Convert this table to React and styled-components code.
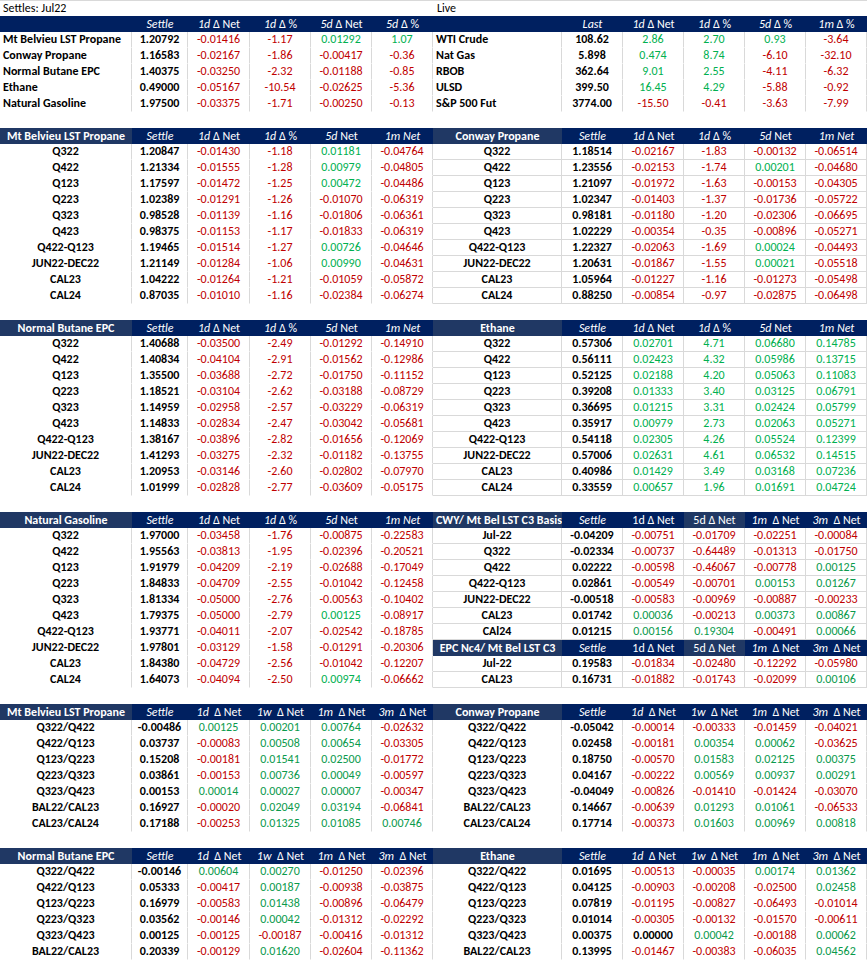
import React from "react";
import styled, { createGlobalStyle } from "styled-components";

const NAVY = "#002060";
const LIGHT = "#203864";
const RED = "#c00000";
const GREEN = "#00b050";
const DEEP_GREEN = "#0a9a4c";
const GRID = "#d9d9d9";

const GlobalStyle = createGlobalStyle`
  html, body { margin: 0; padding: 0; background: #fff; }
  body {
    font-family: Calibri, Carlito, Lato, "Liberation Sans", sans-serif;
    font-size: 12px;
    color: #000;
  }
`;

const LEFT_COLS = "132px 56px 62px 61px 61px 61px";
const RIGHT_COLS = "129px 61px 61px 61px 61px 61px";

const Sheet = styled.div`
  width: 867px;
  display: flex;
  flex-direction: column;
`;

const TitleRow = styled.div`
  display: grid;
  grid-template-columns: 433px 434px;
  height: 16px;
  box-sizing: border-box;
  border-top: 1px solid ${GRID};
`;

const TitleText = styled.div`
  padding-left: ${(p) => p.$pad || 3}px;
  line-height: 15px;
  white-space: nowrap;
`;

const Band = styled.div`
  display: grid;
  grid-template-columns: 433px 434px;
  align-items: start;
`;

const Gap = styled.div`
  height: 16px;
`;

const Stack = styled.div`
  display: flex;
  flex-direction: column;
`;

const Grid = styled.div`
  display: grid;
  grid-template-columns: ${(p) => p.$cols};
  grid-auto-rows: 16px;
`;

const Head = styled.div`
  background: ${(p) => (p.$light ? LIGHT : NAVY)};
  color: #fff;
  font-weight: ${(p) => (p.$bold ? 700 : 400)};
  text-align: center;
  line-height: 16px;
  white-space: ${(p) => (p.$clip ? "nowrap" : "pre")};
  overflow: hidden;
  padding: ${(p) => (p.$clip ? "0 0 0 3px" : "0")};
  text-align: ${(p) => (p.$clip ? "left" : "center")};
`;

const Em = styled.i`
  font-style: italic;
`;

const Cell = styled.div`
  box-sizing: border-box;
  line-height: 15px;
  height: 16px;
  white-space: nowrap;
  overflow: hidden;
  text-align: ${(p) => (p.$left ? "left" : "center")};
  padding-left: ${(p) => (p.$left ? "3px" : "0")};
  color: ${(p) => p.$color};
  font-weight: ${(p) => (p.$bold ? 700 : 400)};
  border-right: 1px solid ${GRID};
  border-bottom: 1px solid ${(p) => (p.$lines ? GRID : "transparent")};
`;

function HeadText({ text }) {
  const parts = text.split("*");
  return parts.map((s, i) => (i % 2 ? <Em key={i}>{s}</Em> : <React.Fragment key={i}>{s}</React.Fragment>));
}

function toneOf(v, deep) {
  if (/^-/.test(v)) return RED;
  if (/^0\.0+$/.test(v)) return "#000";
  return deep ? DEEP_GREEN : GREEN;
}

function Table({ cols, title, titleLight = true, heads, rows, leftLabels, lines, deep, clipTitle, lightHeads = [] }) {
  return (
    <Grid $cols={cols}>
      <Head $bold $light={titleLight} $clip={clipTitle}>{title}</Head>
      {heads.map((h, i) => (
        <Head key={i} $light={lightHeads.includes(i)}>
          <HeadText text={h} />
        </Head>
      ))}
      {rows.map((r, ri) =>
        r.map((v, ci) => {
          if (ci === 0)
            return (
              <Cell key={ri + "-" + ci} $left={leftLabels} $bold $color="#000" $lines={lines}>
                {v}
              </Cell>
            );
          if (ci === 1)
            return (
              <Cell key={ri + "-" + ci} $bold $color="#000" $lines={lines}>
                {v}
              </Cell>
            );
          const c = toneOf(v, deep);
          return (
            <Cell key={ri + "-" + ci} $bold={c === "#000"} $color={c} $lines={lines}>
              {v}
            </Cell>
          );
        })
      )}
    </Grid>
  );
}

const split = (s) => s.trim().split("\n").map((l) => l.trim().split(/\s+/));
const splitNamed = (s) =>
  s
    .trim()
    .split("\n")
    .map((l) => l.split("|").map((x) => x.trim()));

const overviewLeft = splitNamed(`
Mt Belvieu LST Propane|1.20792|-0.01416|-1.17|0.01292|1.07
Conway Propane|1.16583|-0.02167|-1.86|-0.00417|-0.36
Normal Butane EPC|1.40375|-0.03250|-2.32|-0.01188|-0.85
Ethane|0.49000|-0.05167|-10.54|-0.02625|-5.36
Natural Gasoline|1.97500|-0.03375|-1.71|-0.00250|-0.13
`);

const overviewRight = splitNamed(`
WTI Crude|108.62|2.86|2.70|0.93|-3.64
Nat Gas|5.898|0.474|8.74|-6.10|-32.10
RBOB|362.64|9.01|2.55|-4.11|-6.32
ULSD|399.50|16.45|4.29|-5.88|-0.92
S&P 500 Fut|3774.00|-15.50|-0.41|-3.63|-7.99
`);

const mbProp = split(`
Q322 1.20847 -0.01430 -1.18 0.01181 -0.04764
Q422 1.21334 -0.01555 -1.28 0.00979 -0.04805
Q123 1.17597 -0.01472 -1.25 0.00472 -0.04486
Q223 1.02389 -0.01291 -1.26 -0.01070 -0.06319
Q323 0.98528 -0.01139 -1.16 -0.01806 -0.06361
Q423 0.98375 -0.01153 -1.17 -0.01833 -0.06319
Q422-Q123 1.19465 -0.01514 -1.27 0.00726 -0.04646
JUN22-DEC22 1.21149 -0.01284 -1.06 0.00990 -0.04631
CAL23 1.04222 -0.01264 -1.21 -0.01059 -0.05872
CAL24 0.87035 -0.01010 -1.16 -0.02384 -0.06274
`);

const conway = split(`
Q322 1.18514 -0.02167 -1.83 -0.00132 -0.06514
Q422 1.23556 -0.02153 -1.74 0.00201 -0.04680
Q123 1.21097 -0.01972 -1.63 -0.00153 -0.04305
Q223 1.02347 -0.01403 -1.37 -0.01736 -0.05722
Q323 0.98181 -0.01180 -1.20 -0.02306 -0.06695
Q423 1.02229 -0.00354 -0.35 -0.00896 -0.05271
Q422-Q123 1.22327 -0.02063 -1.69 0.00024 -0.04493
JUN22-DEC22 1.20631 -0.01867 -1.55 0.00021 -0.05518
CAL23 1.05964 -0.01227 -1.16 -0.01273 -0.05498
CAL24 0.88250 -0.00854 -0.97 -0.02875 -0.06498
`);

const butane = split(`
Q322 1.40688 -0.03500 -2.49 -0.01292 -0.14910
Q422 1.40834 -0.04104 -2.91 -0.01562 -0.12986
Q123 1.35500 -0.03688 -2.72 -0.01750 -0.11152
Q223 1.18521 -0.03104 -2.62 -0.03188 -0.08729
Q323 1.14959 -0.02958 -2.57 -0.03229 -0.06319
Q423 1.14833 -0.02834 -2.47 -0.03042 -0.05681
Q422-Q123 1.38167 -0.03896 -2.82 -0.01656 -0.12069
JUN22-DEC22 1.41293 -0.03275 -2.32 -0.01182 -0.13755
CAL23 1.20953 -0.03146 -2.60 -0.02802 -0.07970
CAL24 1.01999 -0.02828 -2.77 -0.03609 -0.05175
`);

const ethane = split(`
Q322 0.57306 0.02701 4.71 0.06680 0.14785
Q422 0.56111 0.02423 4.32 0.05986 0.13715
Q123 0.52125 0.02188 4.20 0.05063 0.11083
Q223 0.39208 0.01333 3.40 0.03125 0.06791
Q323 0.36695 0.01215 3.31 0.02424 0.05799
Q423 0.35917 0.00979 2.73 0.02063 0.05271
Q422-Q123 0.54118 0.02305 4.26 0.05524 0.12399
JUN22-DEC22 0.57006 0.02631 4.61 0.06532 0.14515
CAL23 0.40986 0.01429 3.49 0.03168 0.07236
CAL24 0.33559 0.00657 1.96 0.01691 0.04724
`);

const natgas = split(`
Q322 1.97000 -0.03458 -1.76 -0.00875 -0.22583
Q422 1.95563 -0.03813 -1.95 -0.02396 -0.20521
Q123 1.91979 -0.04209 -2.19 -0.02688 -0.17049
Q223 1.84833 -0.04709 -2.55 -0.01042 -0.12458
Q323 1.81334 -0.05000 -2.76 -0.00563 -0.10402
Q423 1.79375 -0.05000 -2.79 0.00125 -0.08917
Q422-Q123 1.93771 -0.04011 -2.07 -0.02542 -0.18785
JUN22-DEC22 1.97801 -0.03129 -1.58 -0.01291 -0.20306
CAL23 1.84380 -0.04729 -2.56 -0.01042 -0.12207
CAL24 1.64073 -0.04094 -2.50 0.00974 -0.06662
`);

const cwy = split(`
Jul-22 -0.04209 -0.00751 -0.01709 -0.02251 -0.00084
Q322 -0.02334 -0.00737 -0.64489 -0.01313 -0.01750
Q422 0.02222 -0.00598 -0.46067 -0.00778 0.00125
Q422-Q123 0.02861 -0.00549 -0.00701 0.00153 0.01267
JUN22-DEC22 -0.00518 -0.00583 -0.00969 -0.00887 -0.00233
CAL23 0.01742 0.00036 -0.00213 0.00373 0.00867
CAl24 0.01215 0.00156 0.19304 -0.00491 0.00066
`);

const epc = split(`
Jul-22 0.19583 -0.01834 -0.02480 -0.12292 -0.05980
CAL23 0.16731 -0.01882 -0.01743 -0.02099 0.00106
`);

const mbSpread = split(`
Q322/Q422 -0.00486 0.00125 0.00201 0.00764 -0.02632
Q422/Q123 0.03737 -0.00083 0.00508 0.00654 -0.03305
Q123/Q223 0.15208 -0.00181 0.01541 0.02500 -0.01772
Q223/Q323 0.03861 -0.00153 0.00736 0.00049 -0.00597
Q323/Q423 0.00153 0.00014 0.00027 0.00007 -0.00347
BAL22/CAL23 0.16927 -0.00020 0.02049 0.03194 -0.06841
CAL23/CAL24 0.17188 -0.00253 0.01325 0.01085 0.00746
`);

const cwySpread = split(`
Q322/Q422 -0.05042 -0.00014 -0.00333 -0.01459 -0.04021
Q422/Q123 0.02458 -0.00181 0.00354 0.00062 -0.03625
Q123/Q223 0.18750 -0.00570 0.01583 0.02125 0.00375
Q223/Q323 0.04167 -0.00222 0.00569 0.00937 0.00291
Q323/Q423 -0.04049 -0.00826 -0.01410 -0.01424 -0.03070
BAL22/CAL23 0.14667 -0.00639 0.01293 0.01061 -0.06533
CAL23/CAL24 0.17714 -0.00373 0.01603 0.00969 0.00818
`);

const butSpread = split(`
Q322/Q422 -0.00146 0.00604 0.00270 -0.01250 -0.02396
Q422/Q123 0.05333 -0.00417 0.00187 -0.00938 -0.03875
Q123/Q223 0.16979 -0.00583 0.01438 -0.00896 -0.06479
Q223/Q323 0.03562 -0.00146 0.00042 -0.01312 -0.02292
Q323/Q423 0.00125 -0.00125 -0.00187 -0.00416 -0.01312
BAL22/CAL23 0.20339 -0.00129 0.01620 -0.02604 -0.11362
`);

const ethSpread = split(`
Q322/Q422 0.01695 -0.00513 -0.00035 0.00174 0.01362
Q422/Q123 0.04125 -0.00903 -0.00208 -0.02500 0.02458
Q123/Q223 0.07819 -0.01195 -0.00827 -0.06493 -0.01014
Q223/Q323 0.01014 -0.00305 -0.00132 -0.01570 -0.00611
Q323/Q423 0.00375 0.00000 0.00042 -0.00188 0.00062
BAL22/CAL23 0.13995 -0.01467 -0.00383 -0.06035 0.04562
`);

const H_OVER_L = ["*Settle*", "*1d* Δ Net", "*1d* Δ %", "*5d* Δ Net", "*5d* Δ %"];
const H_OVER_R = ["*Last*", "*1d* Δ Net", "*1d* Δ %", "*5d* Δ %", "*1m* Δ %"];
const H_CURVE = ["*Settle*", "*1d* Δ Net", "*1d* Δ %", "*5d* Net", "*1m Net*"];
const H_BASIS = ["*Settle*", "1d Δ Net", "5d Δ Net", "*1m*  Δ Net", "*3m*  Δ Net"];
const H_SPREAD = ["*Settle*", "*1d*  Δ Net", "*1w*  Δ Net", "*1m*  Δ Net", "*3m*  Δ Net"];

export default function App() {
  return (
    <Sheet>
      <GlobalStyle />
      <TitleRow>
        <TitleText>Settles: Jul22</TitleText>
        <TitleText $pad={4}>Live</TitleText>
      </TitleRow>
      <Band>
        <Table cols={LEFT_COLS} title="" titleLight={false} heads={H_OVER_L} rows={overviewLeft} leftLabels />
        <Table cols={RIGHT_COLS} title="" titleLight={false} heads={H_OVER_R} rows={overviewRight} leftLabels />
      </Band>
      <Gap />
      <Band>
        <Table cols={LEFT_COLS} title="Mt Belvieu LST Propane" heads={H_CURVE} rows={mbProp} />
        <Table cols={RIGHT_COLS} title="Conway Propane" heads={H_CURVE} rows={conway} lines />
      </Band>
      <Gap />
      <Band>
        <Table cols={LEFT_COLS} title="Normal Butane EPC" heads={H_CURVE} rows={butane} />
        <Table cols={RIGHT_COLS} title="Ethane" heads={H_CURVE} rows={ethane} lines />
      </Band>
      <Gap />
      <Band>
        <Table cols={LEFT_COLS} title="Natural Gasoline" heads={H_CURVE} rows={natgas} />
        <Stack>
          <Table
            cols={RIGHT_COLS}
            title="CWY/ Mt Bel LST C3 Basis"
            heads={H_BASIS}
            rows={cwy}
            lines
            deep
            clipTitle
            lightHeads={[2]}
          />
          <Table
            cols={RIGHT_COLS}
            title="EPC Nc4/ Mt Bel LST C3"
            heads={H_BASIS}
            rows={epc}
            lines
            deep
            lightHeads={[2]}
          />
        </Stack>
      </Band>
      <Gap />
      <Band>
        <Table cols={LEFT_COLS} title="Mt Belvieu LST Propane" heads={H_SPREAD} rows={mbSpread} deep />
        <Table cols={RIGHT_COLS} title="Conway Propane" heads={H_SPREAD} rows={cwySpread} deep />
      </Band>
      <Gap />
      <Band>
        <Table cols={LEFT_COLS} title="Normal Butane EPC" heads={H_SPREAD} rows={butSpread} deep />
        <Table cols={RIGHT_COLS} title="Ethane" heads={H_SPREAD} rows={ethSpread} deep />
      </Band>
    </Sheet>
  );
}
